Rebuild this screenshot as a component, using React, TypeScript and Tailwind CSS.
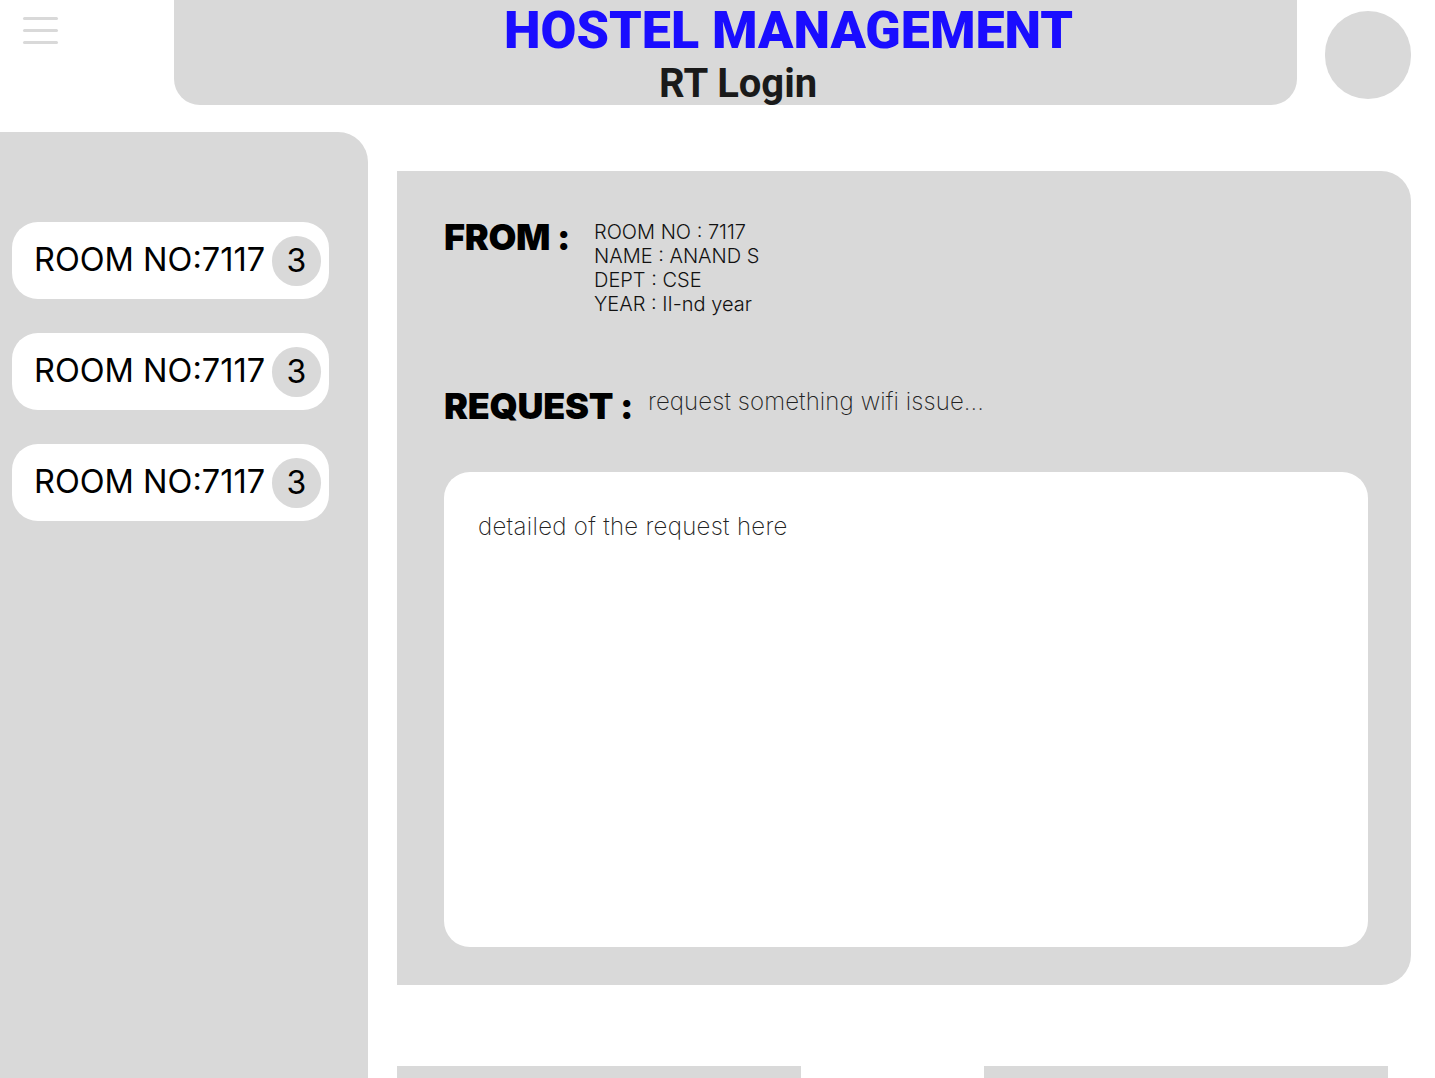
import React from 'react';

const rooms = ['ROOM NO:7117', 'ROOM NO:7117', 'ROOM NO:7117'];

export default function App() {
  return (
    <div className="min-h-screen bg-white font-['Inter',sans-serif] text-black">
      {/* TOP BAR */}
      <header className="flex items-start h-[132px]">
        <div className="w-[174px] pl-[23px] pt-[17px] flex flex-col gap-[9px]">
          <span className="block w-[35px] h-[3px] rounded-full bg-[#d9d9d9]" />
          <span className="block w-[35px] h-[3px] rounded-full bg-[#d9d9d9]" />
          <span className="block w-[35px] h-[3px] rounded-full bg-[#d9d9d9]" />
        </div>
        <div className="w-[1123px] h-[105px] bg-[#d9d9d9] rounded-b-[26px] flex flex-col">
          <h1 className="pl-[330px] pt-[5px] font-['Roboto',sans-serif] text-[52px] leading-[52px] font-black text-[#1a0dff]">
            HOSTEL MANAGEMENT
          </h1>
          <p className="pl-[485px] pt-[7px] font-['Roboto',sans-serif] text-[40px] leading-[40px] font-bold text-[#1a1a1a]">
            RT Login
          </p>
        </div>
        <div className="ml-[28px] mt-[11px] w-[86px] h-[88px] rounded-full bg-[#d9d9d9]" />
      </header>

      <div className="flex items-start">
        {/* SIDEBAR */}
        <aside className="w-[368px] min-h-[946px] bg-[#d9d9d9] rounded-tr-[30px] pt-[90px] pl-[12px] flex flex-col gap-[34px]">
          {rooms.map((room, i) => (
            <div
              key={i}
              className="w-[317px] h-[77px] bg-white rounded-[26px] flex items-center justify-between pl-[22px] pr-[8px]"
            >
              <span className="text-[32.5px] leading-none">{room}</span>
              <span className="w-[49px] h-[50px] rounded-full bg-[#d9d9d9] flex items-center justify-center text-[32px] leading-none">
                3
              </span>
            </div>
          ))}
        </aside>

        {/* MAIN */}
        <main className="ml-[29px] mt-[39px] w-[1014px]">
          <section className="h-[814px] bg-[#d9d9d9] rounded-r-[30px] pl-[47px] pr-[43px] pt-[44px] pb-[38px] flex flex-col">
            <div className="flex items-start">
              <h2 className="w-[150px] text-[36px] leading-[44px] font-black tracking-[-0.3px]">
                FROM :
              </h2>
              <div className="pt-[5px] text-[20px] leading-[24px] font-light text-[#111]">
                <p>ROOM NO : 7117</p>
                <p>NAME : ANAND S</p>
                <p>DEPT : CSE</p>
                <p>YEAR : II-nd year</p>
              </div>
            </div>

            <div className="flex items-center mt-[68px]">
              <h2 className="w-[204px] text-[36px] leading-[44px] font-black tracking-[-0.3px]">
                REQUEST :
              </h2>
              <p className="mb-[8px] text-[24px] leading-[32px] font-extralight text-[#222] tracking-[0.1px]">
                request something wifi issue...
              </p>
            </div>

            <div className="mt-[44px] flex-1 bg-white rounded-[26px] px-[34px] pt-[37px]">
              <p className="text-[24px] font-extralight text-[#222] tracking-[0.3px]">
                detailed of the request here
              </p>
            </div>
          </section>

          <div className="mt-[81px] flex gap-[183px]">
            <button className="w-[404px] h-[60px] bg-[#d9d9d9]" />
            <button className="w-[404px] h-[60px] bg-[#d9d9d9]" />
          </div>
        </main>
      </div>
    </div>
  );
}
